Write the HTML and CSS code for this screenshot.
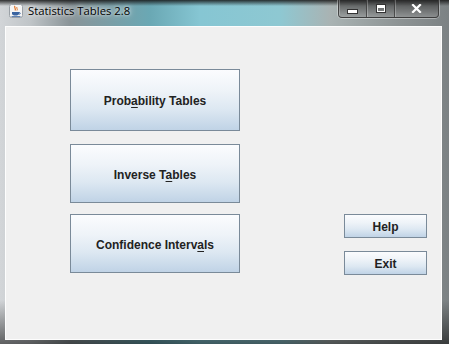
FILE: index.html
```html
<!DOCTYPE html>
<html>
<head>
<meta charset="utf-8">
<link rel="stylesheet" href="styles.css">
</head>
<body>
<div class="frame">
  <div class="titlebar">
    <div class="app-icon">
      <svg width="14" height="14" viewBox="0 0 14 14">
        <rect x="0.5" y="0.5" width="13" height="13" rx="2" fill="#f4f4f4" stroke="#9aa0a6"/>
        <path d="M6 2 C4.5 3.5 7.5 4.5 6 6.5" stroke="#e07020" stroke-width="1.2" fill="none"/>
        <path d="M8 3 C7 4 9 5 8 6.5" stroke="#e07020" stroke-width="1" fill="none"/>
        <path d="M3 8 H10 V9.5 C10 11 8.5 11.5 6.5 11.5 C4.5 11.5 3 11 3 9.5 Z" fill="#3a64a0"/>
        <path d="M10 8.5 C11.8 8.5 11.8 10.2 10 10.2" stroke="#3a64a0" stroke-width="0.9" fill="none"/>
        <rect x="2.5" y="12" width="9" height="0.8" fill="#3a64a0"/>
      </svg>
    </div>
    <div class="title">Statistics Tables 2.8</div>
    <div class="win-controls">
      <div class="wbtn wmin"><span class="glyph-min"></span></div>
      <div class="wbtn wmax"><span class="glyph-max"></span></div>
      <div class="wbtn wclose">
        <svg width="11" height="9" viewBox="0 0 11 9"><path d="M2 1 L9 8 M9 1 L2 8" stroke="#fff" stroke-width="2.2" stroke-linecap="square"/></svg>
      </div>
    </div>
  </div>
  <div class="content">
    <div class="col-main">
      <button class="btn big first">Prob<u>a</u>bility Tables</button>
      <button class="btn big second">Inverse T<u>a</u>bles</button>
      <button class="btn big third">Confidence Interv<u>a</u>ls</button>
    </div>
    <div class="col-side">
      <button class="btn small">Help</button>
      <button class="btn small">Exit</button>
    </div>
  </div>
</div>
</body>
</html>
```
FILE: styles.css
```css
html, body {
  margin: 0;
  padding: 0;
}
body {
  width: 449px;
  height: 344px;
  overflow: hidden;
  background: #3a3a3a;
}
.frame {
  width: 449px;
  height: 344px;
  display: flex;
  flex-direction: column;
  background:
    linear-gradient(to bottom, rgba(20,20,20,0.85) 0px, rgba(20,20,20,0.0) 6px, rgba(0,0,0,0) 300px, rgba(0,0,0,0.55) 344px),
    linear-gradient(to right, #d2d5d8 0px, #c0c5c8 30px, #8a9498 70px, #6aa8b4 150px, #86c6d3 200px, #8ec8d2 280px, #a9b3b3 330px, #8d9394 400px, #7c8284 449px);
}
.titlebar {
  height: 26px;
  display: flex;
  align-items: flex-start;
  flex-shrink: 0;
}
.app-icon {
  margin: 4px 0 0 9px;
  width: 14px;
  height: 14px;
}
.title {
  margin: 3px 0 0 5px;
  font-family: "Open Sans", "Noto Sans", sans-serif;
  font-size: 11.3px;
  line-height: 16px;
  color: #000;
  text-shadow: 0 0 6px rgba(255,255,255,0.9), 0 0 3px rgba(255,255,255,0.8);
}
.win-controls {
  margin-left: auto;
  margin-right: 10px;
  display: flex;
  height: 17px;
  border: 1px solid rgba(60,60,60,0.9);
  border-top: none;
  border-radius: 0 0 4px 4px;
  box-shadow: 0 0 0 1px rgba(255,255,255,0.35);
  background: linear-gradient(to bottom, rgba(40,40,40,0.7), rgba(150,150,150,0.5));
  overflow: hidden;
}
.wbtn {
  display: flex;
  align-items: center;
  justify-content: center;
  height: 17px;
  border-right: 1px solid rgba(60,60,60,0.8);
  box-shadow: inset 1px 0 0 rgba(255,255,255,0.25);
}
.wmin { width: 27px; }
.wmax { width: 27px; }
.wclose { width: 43px; border-right: none; }
.glyph-min {
  display: block;
  width: 9px;
  height: 3px;
  margin-top: 5px;
  background: #fff;
  border: 1px solid #333;
}
.glyph-max {
  display: block;
  width: 8px;
  height: 5px;
  border: 1px solid #333;
  border-top: 3px solid #fff;
  box-shadow: inset 0 0 0 1px #fff;
  outline: 1px solid #333;
  outline-offset: -1px;
  background: transparent;
}
.content {
  flex: 1;
  margin: 0 7px 4px 5px;
  border: 1px solid #fdfdfd;
  background: #f0f0f0;
  display: flex;
  align-items: flex-start;
}
.col-main {
  margin: 42px 0 0 64px;
  width: 170px;
  display: flex;
  flex-direction: column;
}
.col-side {
  margin: 187px 0 0 104px;
  width: 83px;
  display: flex;
  flex-direction: column;
  gap: 13px;
}
.btn {
  font-family: "Liberation Sans", Arial, sans-serif;
  font-weight: bold;
  font-size: 12px;
  color: #222;
  border: 1px solid #7a8a99;
  background: linear-gradient(to bottom, #fbfcfe 0%, #eef3f8 35%, #dde8f2 65%, #c0d3e6 100%);
  padding: 2px 0 0 0;
  margin: 0;
  box-sizing: border-box;
  text-align: center;
}
.btn u {
  text-underline-offset: 2px;
}
.big.first { height: 62px; }
.big.second { height: 59px; margin-top: 13px; }
.big.third { height: 59px; margin-top: 11px; }
.small { height: 24px; }
```
